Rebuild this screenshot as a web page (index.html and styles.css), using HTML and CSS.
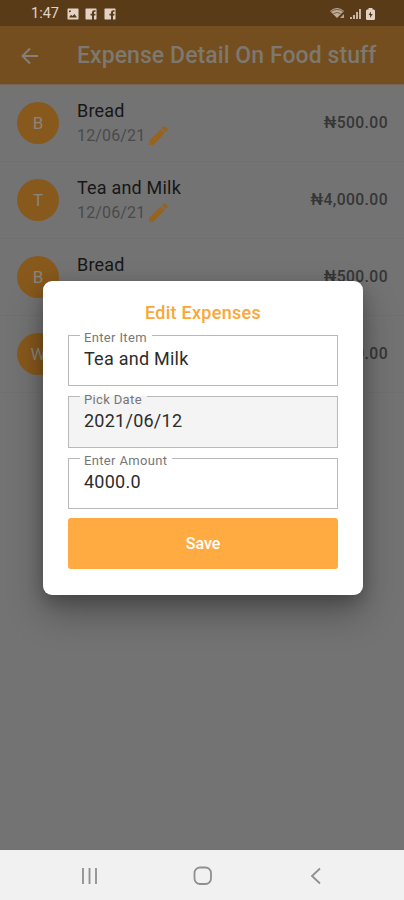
FILE: index.html
```
<!DOCTYPE html>
<html lang="en">
<head>
<meta charset="utf-8">
<title>Expense Detail</title>
<link rel="stylesheet" href="styles.css">
</head>
<body>
<svg width="0" height="0" class="defs">
  <symbol id="pencil" viewBox="0 0 24 24"><path d="M3 17.25V21h3.75L17.81 9.94l-3.75-3.75L3 17.25zM20.71 7.04a1 1 0 0 0 0-1.41l-2.34-2.34a1 1 0 0 0-1.41 0l-1.83 1.83 3.75 3.75 1.83-1.83z"/></symbol>
  <symbol id="social" viewBox="0 0 12 12"><path fill-rule="evenodd" d="M1 .5h10l.5.5v10l-.5.5H9V7.4h1.4V5.7H9V4.6q0-.8.8-.8h.8V2.2H9.2Q7 2.2 7 4.4v1.3H5.5v1.7H7v4.1H1L.5 11V1z"/></symbol>
</svg>
<div class="screen">
  <header class="status">
    <div class="status-left">
      <span class="time">1:47</span>
      <svg width="12" height="12" viewBox="0 0 12 12"><path fill-rule="evenodd" d="M1 .5h10l.5.5v10l-.5.5H1L.5 11V1zM2 9.5h8L7.5 6 5.5 8 4 6.8zM2 2.5v2l2-1V2.5z"/></svg>
      <svg width="12" height="12"><use href="#social"/></svg>
      <svg width="12" height="12"><use href="#social"/></svg>
    </div>
    <div class="status-right">
      <svg width="16" height="13" viewBox="0 0 16 13"><path opacity=".75" d="M0 4Q7-2 14 4L7 11z"/><path class="arc" d="M1 4.500q6-4 12 0M3.500 6.500q3.500-2 7 0"/><path d="M14 7v4h-4z" opacity=".7"/></svg>
      <svg width="12" height="12" viewBox="0 0 12 12"><path d="M0 9h2v2H0zM3 7h2v4H3zM6 4h2v7H6zM9 1h2v10H9z" opacity=".8"/></svg>
      <svg width="9" height="12" viewBox="0 0 9 12"><path fill-rule="evenodd" d="M2.500 0h4v1.500H8L9 2.500V11l-.7 1H.7L0 11V2.500l1-1h1.500zM5 3.500L2.500 7H4v3l2.800-4H5z"/></svg>
    </div>
  </header>
  <div class="appbar">
    <svg width="18" height="18" viewBox="0 0 18 18"><path d="M17 9H2M9 1.500L1.500 9 9 16.500"/></svg>
    <h1>Expense Detail On Food stuff</h1>
  </div>
  <main class="list">
    <div class="row"><div class="avatar">B</div><div class="info"><div class="name">Bread</div><div class="date">12/06/21<svg><use href="#pencil"/></svg></div></div><div class="amount">₦500.00</div></div>
    <div class="row"><div class="avatar">T</div><div class="info"><div class="name">Tea and Milk</div><div class="date">12/06/21<svg><use href="#pencil"/></svg></div></div><div class="amount">₦4,000.00</div></div>
    <div class="row"><div class="avatar">B</div><div class="info"><div class="name">Bread</div></div><div class="amount">₦500.00</div></div>
    <div class="row"><div class="avatar">W</div><div class="info"></div><div class="amount">₦500.00</div></div>
  </main>
  <nav class="nav">
    <svg width="18" height="18" viewBox="0 0 18 18"><path d="M2 1v16M8.500 1v16M15 1v16"/></svg>
    <svg class="home" width="20" height="20" viewBox="0 0 20 20"><rect x="1.500" y="1.500" width="16.500" height="16.500" rx="5.500"/></svg>
    <svg width="12" height="18" viewBox="0 0 12 18"><path d="M10 1.500L2 9l8 7.500"/></svg>
  </nav>
  <section class="dialog">
    <h2>Edit Expenses</h2>
    <fieldset><legend>Enter Item</legend><div class="value">Tea and Milk</div></fieldset>
    <fieldset class="filled"><legend>Pick Date</legend><div class="value">2021/06/12</div></fieldset>
    <fieldset><legend>Enter Amount</legend><div class="value">4000.0</div></fieldset>
    <button>Save</button>
  </section>
</div>
</body>
</html>
```
FILE: styles.css
```
* { box-sizing: border-box; }
body { margin: 0; font-family: Roboto, sans-serif; }
.defs { position: absolute; }
.screen {
  position: relative;
  width: 404px;
  height: 900px;
  display: flex;
  flex-direction: column;
  overflow: hidden;
  background: #737373;
}
.status {
  height: 26px;
  flex: none;
  display: flex;
  justify-content: space-between;
  align-items: center;
  padding: 1px 29px 0 31px;
  background: #593b18;
  color: #e2d3c5;
}
.status svg { fill: #e2d3c5; display: block; }
.status .arc { fill: none; stroke: #593b18; stroke-width: .7; }
.status-left { display: flex; align-items: center; gap: 6.5px; }
.status-right { display: flex; align-items: center; gap: 4px; }
.time { font-size: 14.5px; line-height: 18px; width: 29px; }
.appbar {
  height: 59px;
  flex: none;
  display: flex;
  align-items: center;
  padding: 2px 0 0 21px;
  gap: 38px;
  background: #744e1e;
  border-bottom: 1px solid #7a6350;
}
.appbar svg { fill: none; stroke: #858079; stroke-width: 2; }
h1 {
  margin: 0;
  font-size: 23px;
  line-height: 30px;
  font-weight: 500;
  letter-spacing: .07px;
  color: #7d7870;
  white-space: nowrap;
}
.list { flex: 1; }
.row {
  height: 77px;
  display: flex;
  padding: 17px 16px 0 17px;
  border-bottom: 1px solid #707070;
}
.avatar {
  width: 42px;
  height: 42px;
  border-radius: 50%;
  background: #87591c;
  color: #898580;
  font-size: 17px;
  line-height: 42px;
  text-align: center;
}
.info { flex: 1; padding-left: 18px; }
.name { font-size: 18px; line-height: 22px; margin-top: -2px; color: #171717; letter-spacing: .2px; }
.date { display: flex; align-items: center; font-size: 16px; line-height: 24px; padding-top: 1px; color: #4a4a4a; letter-spacing: .15px; }
.date svg { width: 25px; height: 25px; margin: 0 0 0 1px; fill: #98631c; }
.amount { font-size: 15.7px; line-height: 42px; font-weight: 500; color: #363636; letter-spacing: .4px; }
.nav {
  height: 50px;
  flex: none;
  display: flex;
  justify-content: space-between;
  align-items: center;
  padding: 1px 82px 0 81px;
  background: #f1f1f1;
}
.nav svg { fill: none; stroke: #8f8f8f; stroke-width: 1.8; }
.nav .home { margin-right: 4px; }
.dialog {
  position: absolute;
  left: 43px;
  top: 281px;
  width: 320px;
  height: 314px;
  padding: 21px 25px 0;
  border-radius: 9px;
  background: #fff;
  box-shadow: 0 18px 36px rgba(0,0,0,.3), 0 6px 16px rgba(0,0,0,.2);
}
h2 {
  margin: 0 0 4px;
  font-size: 18px;
  line-height: 22px;
  font-weight: 500;
  letter-spacing: .27px;
  text-align: center;
  color: #fba638;
}
fieldset {
  height: 58px;
  margin: 0 0 3.5px;
  padding: 0 11px;
  border: 1px solid #b9b9b9;
  min-width: 0;
}
legend {
  position: relative;
  top: 3px;
  padding: 0 5px 0 4px;
  font-size: 13px;
  line-height: 14px;
  letter-spacing: .35px;
  color: #777;
}
.value { padding: 6px 0 0 4px; font-size: 18px; line-height: 22px; color: #2c2c2c; letter-spacing: .25px; }
.filled { background: #f4f4f4; }
button {
  display: block;
  width: 270px;
  height: 51px;
  margin-top: 9px;
  border: 0;
  border-radius: 3px;
  background: #ffab42;
  color: #fff;
  font: 500 16px Roboto, sans-serif;
}
```
